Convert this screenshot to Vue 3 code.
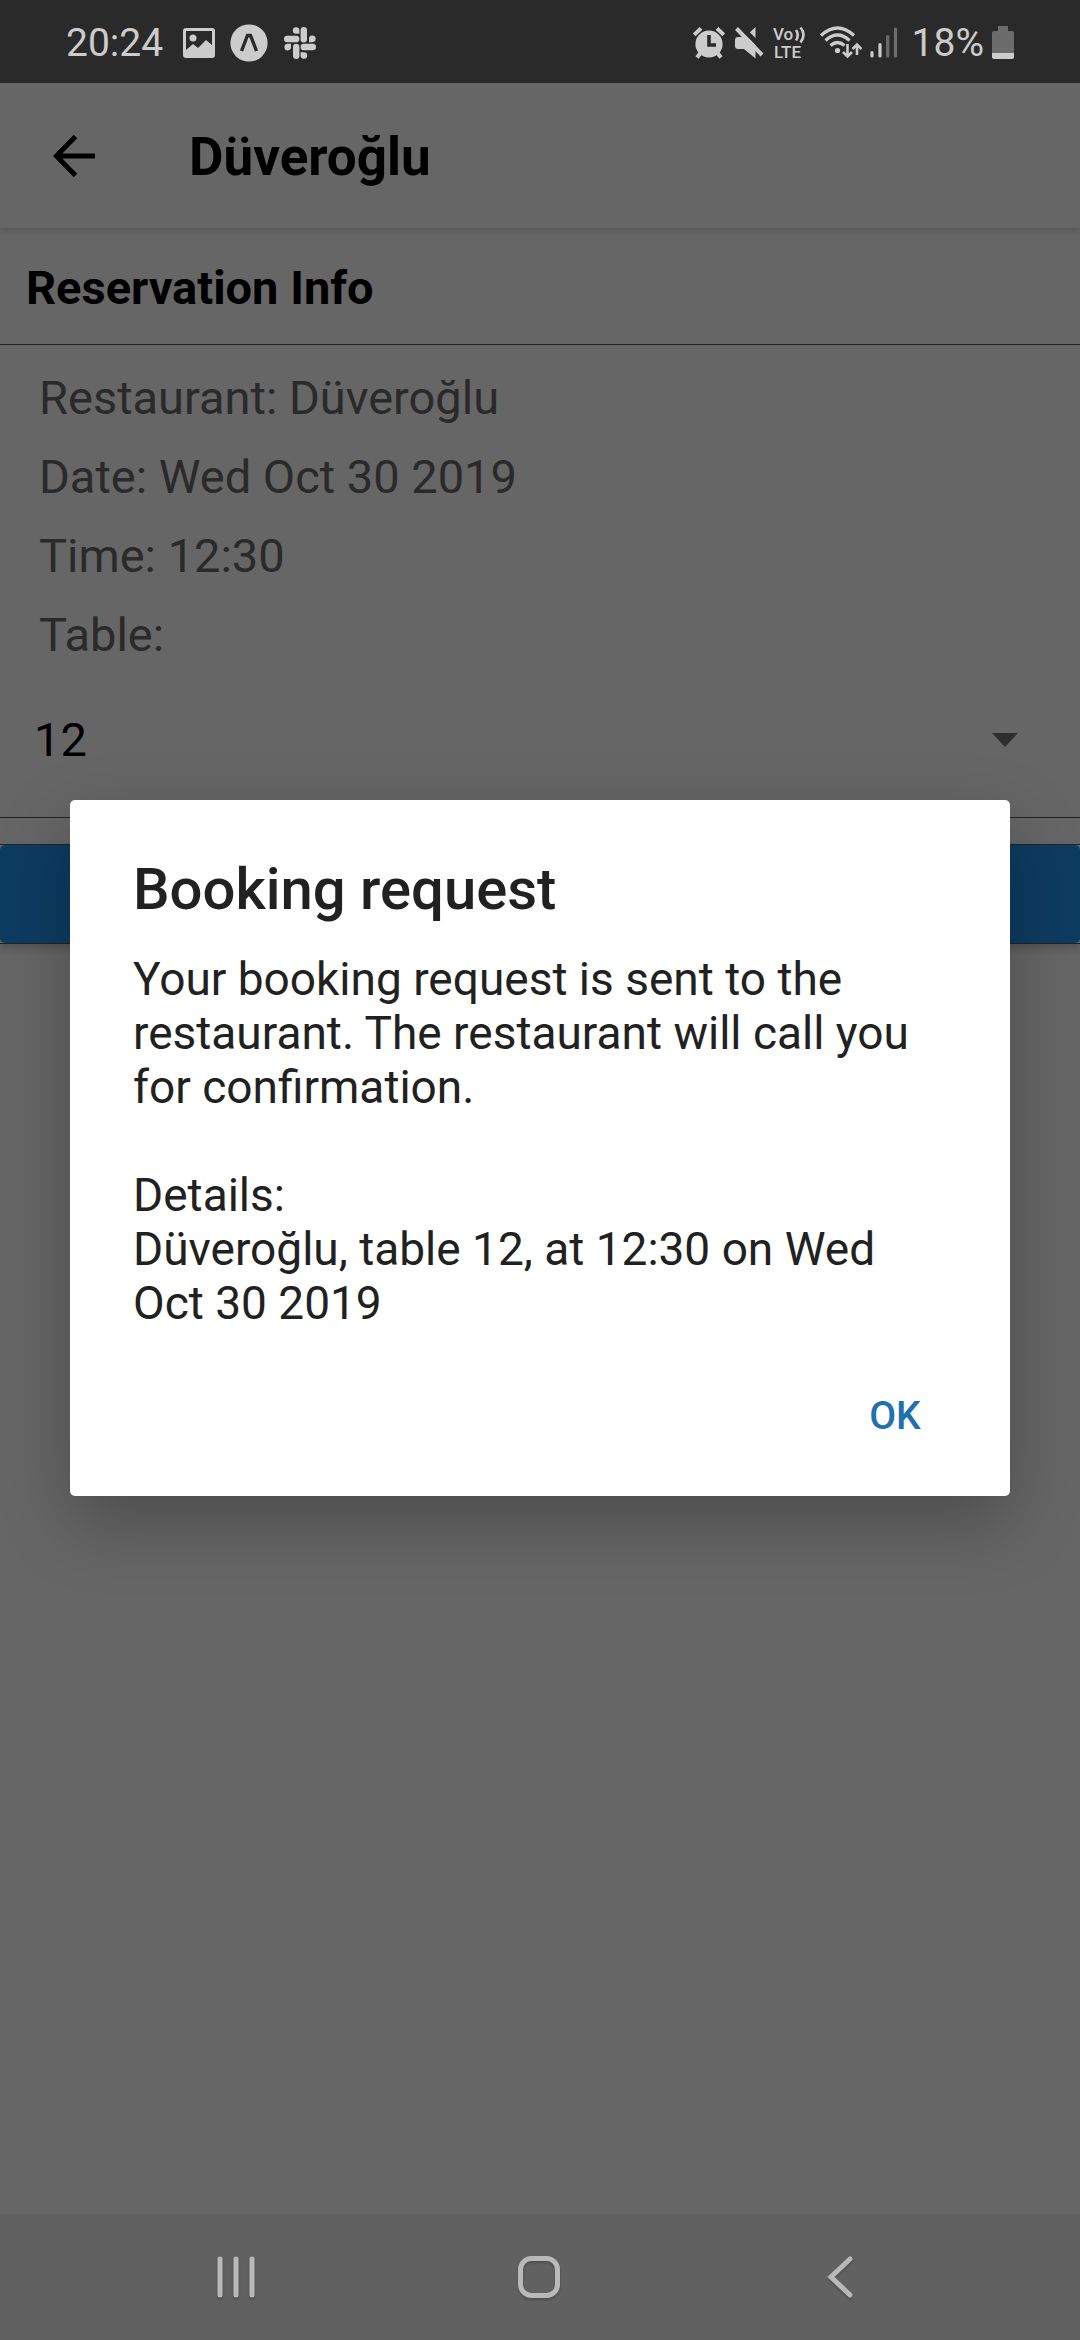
<script setup>
import { ref } from 'vue'

const booking = {
  restaurant: 'Düveroğlu',
  date: 'Wed Oct 30 2019',
  time: '12:30',
}
const tables = ['12']
const table = ref('12')
const dialogOpen = ref(true)
</script>

<template>
  <div class="screen">
    <div class="status">
      <div class="status-group">
        <span class="status-text">20:24</span>
        <svg class="gallery" width="32" height="30" viewBox="0 0 32 30">
          <path fill="currentColor" fill-rule="evenodd" d="M3 0h26a3 3 0 0 1 3 3v24a3 3 0 0 1-3 3H3a3 3 0 0 1-3-3V3a3 3 0 0 1 3-3zM3 3v19l7-6 5 4 8-8 6 5V3z" />
          <circle cx="10" cy="10" r="3.5" fill="currentColor" />
        </svg>
        <svg class="expo" width="38" height="38" viewBox="0 0 38 38">
          <circle cx="19" cy="19" r="18.6" fill="currentColor" />
          <path d="M11.500 27 17.500 11.500h3L26.500 27" fill="none" stroke="#2a2a2a" stroke-width="3.400" />
        </svg>
        <svg class="slack" width="32" height="32" viewBox="0 0 32 32" fill="currentColor">
          <rect x="16.600" y="0" width="6.400" height="15.400" rx="3.200" />
          <rect x="9" y="16.800" width="6.400" height="15.200" rx="3.200" />
          <rect x="0" y="8.800" width="15.400" height="6.400" rx="3.200" />
          <rect x="16.600" y="16.800" width="15.400" height="6.400" rx="3.200" />
          <path d="M15.400 6.800h-3.300A3.300 3.300 0 1 1 15.400 3.400z" />
          <path d="M25 15.200v-3.300a3.300 3.300 0 1 1 3.400 3.300z" />
          <path d="M16.600 25.200h3.300a3.300 3.300 0 1 1-3.300 3.400z" />
          <path d="M7 16.800v3.300a3.300 3.300 0 1 1-3.400-3.300z" />
        </svg>
      </div>
      <div class="status-group">
        <svg class="alarm" width="32" height="32" viewBox="0 0 32 32">
          <circle cx="16" cy="17" r="13.600" fill="currentColor" />
          <path d="M1.200 7.800 8 1.400M30.800 7.800 24 1.400M7.500 26 4 30.500M24.500 26l3.500 4.500" stroke="currentColor" stroke-width="4" />
          <path d="M16 8v10h7" fill="none" stroke="#2a2a2a" stroke-width="3.600" />
        </svg>
        <svg class="mute" width="30" height="32" viewBox="0 0 30 32">
          <path fill="currentColor" d="M20.500 0v31.500L9 22H3a3 3 0 0 1-3-3v-6a3 3 0 0 1 3-3h7z" />
          <path d="M4-2 31 25" stroke="#2a2a2a" stroke-width="5" />
          <path d="M1.500 1.500 27 28" stroke="currentColor" stroke-width="4" />
        </svg>
        <svg class="volte" width="34" height="40" viewBox="0 0 34 40" fill="currentColor">
          <text x="0" y="17" font-size="17" font-weight="500">Vo</text>
          <text x="1" y="35" font-size="17" font-weight="500">LTE</text>
          <path d="M23 7q3.500 5 0 10.500M27.500 4.500q6 7 0 15" fill="none" stroke="currentColor" stroke-width="2.600" />
        </svg>
        <svg class="wifi" width="42" height="34" viewBox="0 0 42 34" fill="none" stroke="currentColor">
          <path d="M1 9.500Q17.500-5.500 34 9.500" stroke-width="3.200" />
          <path d="M5.500 14.500Q17.500 3.500 29.500 14.500" stroke-width="3.200" />
          <path d="M10.500 19.500q7-6 14 0" stroke-width="3.200" />
          <circle cx="17.500" cy="24.500" r="2.600" fill="currentColor" stroke="none" />
          <path d="M27.500 18v12.500M23 26l4.500 4.500L32 26M37 29V18.500M32.500 23l4.500-4.500 4.500 4.500" stroke-width="2.600" />
        </svg>
        <svg class="signal" width="28" height="32" viewBox="0 0 28 32" stroke="currentColor" stroke-width="3.200" stroke-linecap="round">
          <path d="M2 25.500V29M10 17.500V29" />
          <path d="M17.700 9.500V29M25.500 2V29" stroke="#6c6c6c" />
        </svg>
        <span class="status-text percent">18%</span>
        <svg class="battery" width="22" height="34" viewBox="0 0 22 34">
          <path fill="#6c6c6c" d="M6 0h10v5h4a2 2 0 0 1 2 2v20H0V7a2 2 0 0 1 2-2h4z" />
          <path fill="currentColor" d="M0 27h22v4a2 2 0 0 1-2 2H2a2 2 0 0 1-2-2z" />
        </svg>
      </div>
    </div>

    <div class="app">
      <header class="bar">
        <button class="back" type="button" aria-label="Back">
          <svg width="42" height="42" viewBox="0 0 42 42" fill="none" stroke="currentColor" stroke-width="5">
            <path d="M42 21H4M22.500 1.500 3.500 21l19 19.500" />
          </svg>
        </button>
        <h1>{{ booking.restaurant }}</h1>
      </header>

      <main>
        <h2>Reservation Info</h2>
        <div class="info">
          <p>Restaurant: {{ booking.restaurant }}</p>
          <p>Date: {{ booking.date }}</p>
          <p>Time: {{ booking.time }}</p>
          <p><label for="table">Table:</label></p>
          <div class="picker">
            <select id="table" v-model="table">
              <option v-for="t in tables" :key="t" :value="t">{{ t }}</option>
            </select>
            <svg class="caret" width="26" height="14" viewBox="0 0 26 14">
              <path fill="currentColor" d="M0 0h26L13 14z" />
            </svg>
          </div>
        </div>
        <div class="action">
          <button class="book" type="button" aria-label="Book" @click="dialogOpen = true"></button>
        </div>
      </main>

      <div v-if="dialogOpen" class="scrim">
        <section class="dialog" role="dialog" aria-modal="true" aria-labelledby="dialog-title">
          <h3 id="dialog-title">Booking request</h3>
          <p class="message">Your booking request is sent to the restaurant. The restaurant will call you for confirmation.</p>
          <p class="message">Details:<br />{{ booking.restaurant }}, table {{ table }}, at {{ booking.time }} on {{ booking.date }}</p>
          <div class="actions">
            <button class="ok" type="button" @click="dialogOpen = false">OK</button>
          </div>
        </section>
      </div>
    </div>

    <nav class="nav">
      <button type="button" aria-label="Recent apps">
        <svg width="42" height="44" viewBox="0 0 42 44" fill="none" stroke="currentColor" stroke-width="5" stroke-linecap="round">
          <path d="M5 4v36M21 4v36M37 4v36" />
        </svg>
      </button>
      <button type="button" aria-label="Home">
        <svg width="42" height="44" viewBox="0 0 42 44" fill="none" stroke="currentColor" stroke-width="5">
          <rect x="2.500" y="3.500" width="37" height="37" rx="11" />
        </svg>
      </button>
      <button type="button" aria-label="Back">
        <svg width="42" height="44" viewBox="0 0 42 44" fill="none" stroke="currentColor" stroke-width="5" stroke-linecap="round">
          <path d="M30 4 11 22l19 18" />
        </svg>
      </button>
    </nav>
  </div>
</template>

<style>
body {
  margin: 0;
  background: #666;
}
</style>

<style scoped>
.screen {
  display: flex;
  flex-direction: column;
  min-height: 100vh;
  font-family: Roboto, "Noto Sans", sans-serif;
}

h1, h2, h3, p {
  margin: 0;
}

button {
  padding: 0;
  border: 0;
  background: none;
  font-family: inherit;
  color: inherit;
}

svg {
  display: block;
  flex: none;
}

.status {
  display: flex;
  justify-content: space-between;
  align-items: center;
  box-sizing: border-box;
  height: 83px;
  padding: 3px 66px 0;
  background: #2a2a2a;
  color: #ccc;
}

.status-group {
  display: flex;
  align-items: center;
}

.status-text {
  font-size: 39px;
  line-height: 48px;
}

.gallery { margin-left: 20px; }
.expo { margin-left: 15px; }
.slack { margin-left: 16px; }
.mute { margin-left: 10px; }
.volte { margin-left: 8px; }
.wifi { margin-left: 13px; }
.signal { margin-left: 8px; }
.percent { margin-left: 14px; }
.battery { margin-left: 8px; }

.app {
  position: relative;
  flex: 1;
  display: flex;
  flex-direction: column;
  background: #fff;
}

.bar {
  display: flex;
  align-items: center;
  height: 145px;
  padding: 0 53px;
  gap: 94px;
  box-shadow: 0 2px 6px rgba(0, 0, 0, 0.2);
}

h1 {
  padding-top: 3px;
  font-size: 53px;
  line-height: 62px;
  font-weight: 700;
}

h2 {
  padding: 32px 26px 28px;
  border-bottom: 1px solid #555;
  font-size: 47px;
  line-height: 56px;
  font-weight: 700;
}

.info {
  padding: 13px 0 12px;
  border-bottom: 1px solid #555;
}

.info p {
  padding: 0 39px;
  font-size: 47px;
  line-height: 79px;
  color: #696969;
}

.picker {
  position: relative;
  display: flex;
}

.picker select {
  flex: 1;
  height: 131px;
  padding: 0 34px;
  border: 0;
  appearance: none;
  background: transparent;
  color: #000;
  font-family: inherit;
  font-size: 47px;
}

.caret {
  position: absolute;
  top: 59px;
  right: 62px;
  color: #737373;
  pointer-events: none;
}

.action {
  margin-top: 26px;
  border-top: 1px solid #555;
  border-bottom: 1px solid #555;
  box-shadow: 0 4px 8px rgba(0, 0, 0, 0.2);
}

.book {
  display: block;
  width: 100%;
  height: 98px;
  border-radius: 5px;
  background: #2196f3;
}

.scrim {
  position: absolute;
  inset: 0;
  display: flex;
  align-items: center;
  justify-content: center;
  padding: 0 70px 1px;
  background: rgba(0, 0, 0, 0.6);
}

.dialog {
  flex: 1;
  padding: 55px 31px 17px 63px;
  border-radius: 5px;
  background: #fff;
  color: #212121;
  box-shadow: 0 26px 70px rgba(0, 0, 0, 0.26);
}

h3 {
  margin-bottom: 29px;
  font-size: 58px;
  line-height: 68px;
  font-weight: 500;
}

.message {
  padding-right: 32px;
  font-size: 46px;
  line-height: 54px;
}

.message + .message {
  margin-top: 54px;
}

.actions {
  display: flex;
  justify-content: flex-end;
  margin-top: 23px;
}

.ok {
  width: 168px;
  height: 126px;
  color: #1f71b0;
  font-size: 39px;
  font-weight: 500;
}

.nav {
  display: flex;
  justify-content: space-between;
  align-items: center;
  height: 126px;
  padding: 0 218px 0 215px;
  background: #616161;
  color: #b9b9b9;
}

.nav svg {
  filter: drop-shadow(0 2px 1px rgba(0, 0, 0, 0.2));
}
</style>
